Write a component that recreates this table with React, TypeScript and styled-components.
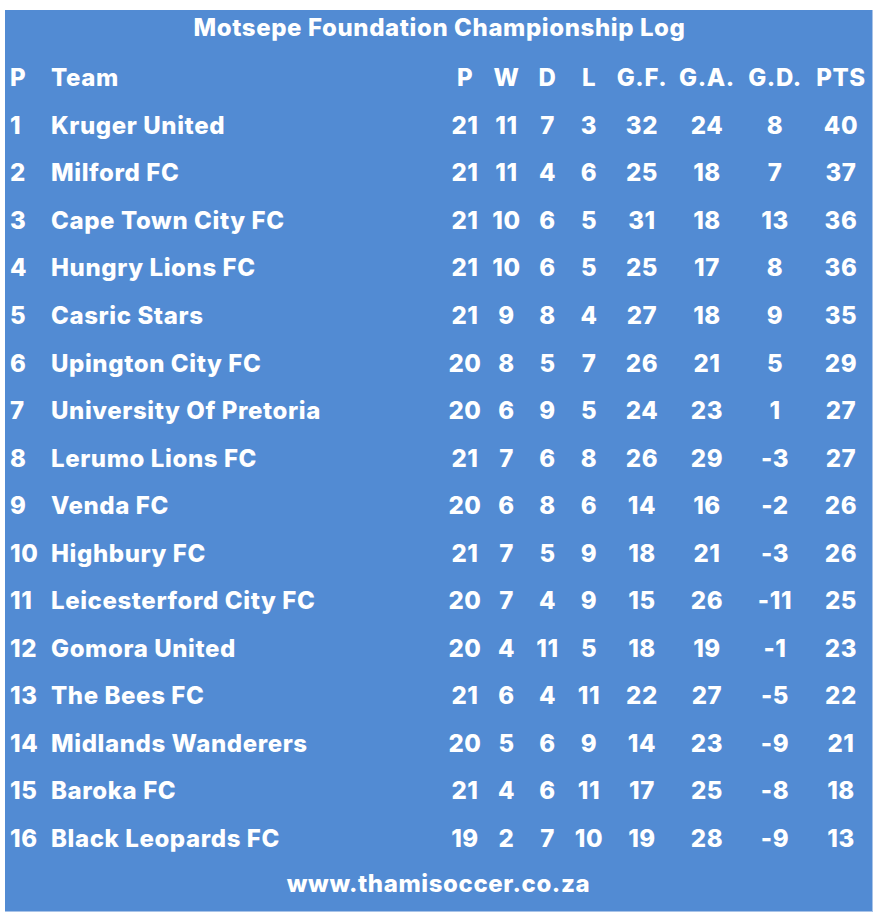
import React from "react";
import styled, { createGlobalStyle } from "styled-components";

const Global = createGlobalStyle`
  html, body { margin: 0; padding: 0; background: #ffffff; }
  body { font-family: "Inter", "Liberation Sans", sans-serif; }
`;

const Board = styled.div`
  box-sizing: border-box;
  margin: 10px 0 0 5px;
  width: 868px;
  height: 902px;
  background: #528bd3;
  color: #ffffff;
  font-family: "Inter", "Liberation Sans", sans-serif;
  font-weight: 800;
  letter-spacing: 0.6px;
  display: flex;
  flex-direction: column;
  border-right: 1px solid #a8c3e8;
  border-bottom: 1px solid #a8c3e8;
`;

const Title = styled.div`
  height: 44px;
  display: flex;
  align-items: center;
  justify-content: center;
  font-size: 24px;
  padding-bottom: 10px;
  padding-left: 2px;
  box-sizing: border-box;
`;

const Row = styled.div`
  display: grid;
  grid-template-columns: 41px 1fr 42px 41px 41px 42px 64px 66px 70px 62px;
  align-items: center;
  height: 47.55px;
  padding-left: 5px;
  font-size: 24px;
`;

const Pos = styled.div`
  text-align: left;
`;

const TeamName = styled.div`
  text-align: left;
  white-space: nowrap;
`;

const Num = styled.div`
  text-align: center;
  white-space: nowrap;
`;

const Footer = styled.div`
  flex: 1;
  display: flex;
  align-items: center;
  justify-content: center;
  font-size: 24px;
  padding-bottom: 6px;
`;

type Team = [number, string, number, number, number, number, number, number, number, number];

const teams: Team[] = [
  [1, "Kruger United", 21, 11, 7, 3, 32, 24, 8, 40],
  [2, "Milford FC", 21, 11, 4, 6, 25, 18, 7, 37],
  [3, "Cape Town City FC", 21, 10, 6, 5, 31, 18, 13, 36],
  [4, "Hungry Lions FC", 21, 10, 6, 5, 25, 17, 8, 36],
  [5, "Casric Stars", 21, 9, 8, 4, 27, 18, 9, 35],
  [6, "Upington City FC", 20, 8, 5, 7, 26, 21, 5, 29],
  [7, "University Of Pretoria", 20, 6, 9, 5, 24, 23, 1, 27],
  [8, "Lerumo Lions FC", 21, 7, 6, 8, 26, 29, -3, 27],
  [9, "Venda FC", 20, 6, 8, 6, 14, 16, -2, 26],
  [10, "Highbury FC", 21, 7, 5, 9, 18, 21, -3, 26],
  [11, "Leicesterford City FC", 20, 7, 4, 9, 15, 26, -11, 25],
  [12, "Gomora United", 20, 4, 11, 5, 18, 19, -1, 23],
  [13, "The Bees FC", 21, 6, 4, 11, 22, 27, -5, 22],
  [14, "Midlands Wanderers", 20, 5, 6, 9, 14, 23, -9, 21],
  [15, "Baroka FC", 21, 4, 6, 11, 17, 25, -8, 18],
  [16, "Black Leopards FC", 19, 2, 7, 10, 19, 28, -9, 13],
];

const headers = ["P", "W", "D", "L", "G.F.", "G.A.", "G.D.", "PTS"];

export default function App() {
  return (
    <>
      <Global />
      <Board>
        <Title>Motsepe Foundation Championship Log</Title>
        <Row>
          <Pos>P</Pos>
          <TeamName>Team</TeamName>
          {headers.map((h) => (
            <Num key={h}>{h}</Num>
          ))}
        </Row>
        {teams.map((t) => (
          <Row key={t[0]}>
            <Pos>{t[0]}</Pos>
            <TeamName>{t[1]}</TeamName>
            {t.slice(2).map((v, i) => (
              <Num key={i}>{v}</Num>
            ))}
          </Row>
        ))}
        <Footer>www.thamisoccer.co.za</Footer>
      </Board>
    </>
  );
}
